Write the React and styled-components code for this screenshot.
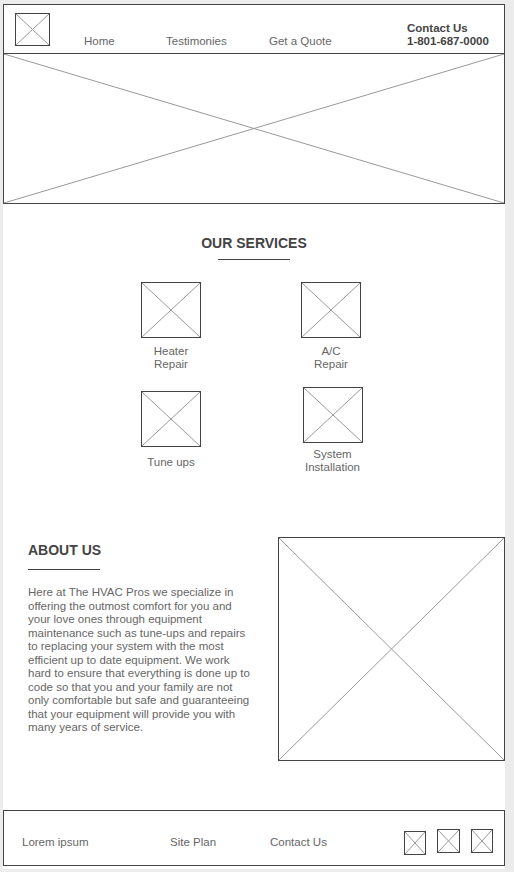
import React from 'react';
import styled, { createGlobalStyle } from 'styled-components';

const GlobalStyle = createGlobalStyle`
  body {
    margin: 0;
    background: #ececec;
    font-family: "Liberation Sans", Arial, sans-serif;
  }
`;

const Page = styled.div`
  box-sizing: border-box;
  width: 502px;
  margin: 4px 0 0 3px;
  padding-bottom: 3px;
  background: #fff;
`;

const Frame = styled.div`
  box-sizing: border-box;
  flex-shrink: 0;
  width: ${(p) => p.$w}px;
  height: ${(p) => p.$h}px;
  margin-top: ${(p) => p.$mt || 0}px;
  border: 1px solid #444;
  background: #fff;
`;

const CrossSvg = styled.svg`
  display: block;
  width: 100%;
  height: 100%;
`;

const Cross = () => (
  <CrossSvg viewBox="0 0 100 100" preserveAspectRatio="none">
    <line x1="0" y1="0" x2="100" y2="100" stroke="#999" strokeWidth="1" vectorEffect="non-scaling-stroke" />
    <line x1="100" y1="0" x2="0" y2="100" stroke="#999" strokeWidth="1" vectorEffect="non-scaling-stroke" />
  </CrossSvg>
);

const Placeholder = ({ w, h, mt }) => (
  <Frame $w={w} $h={h} $mt={mt}>
    <Cross />
  </Frame>
);

/* header */
const Header = styled.header`
  box-sizing: border-box;
  display: flex;
  align-items: flex-end;
  height: 50px;
  padding: 0 0 5px 11px;
  border: 1px solid #444;
`;

const LogoSlot = styled.div`
  align-self: flex-start;
  margin-top: 8px;
  margin-right: 34px;
`;

const NavLink = styled.a`
  width: ${(p) => p.$w}px;
  font-size: 11.5px;
  line-height: 13px;
  color: #666;
  text-decoration: none;
`;

const Contact = styled.div`
  font-size: 11.5px;
  line-height: 13px;
  font-weight: bold;
  color: #444;
`;

const Hero = styled.div`
  box-sizing: border-box;
  height: 150px;
  border: 1px solid #444;
  border-top: none;
`;

/* services */
const Services = styled.section`
  padding-top: 31px;
`;

const SectionTitle = styled.h2`
  margin: 0;
  font-size: 14px;
  line-height: 16px;
  font-weight: bold;
  color: #444;
  text-align: ${(p) => p.$align || 'left'};
`;

const Rule = styled.div`
  width: 72px;
  height: 1px;
  background: #444;
  margin: ${(p) => p.$mt}px ${(p) => (p.$center ? 'auto' : '0')} 0;
`;

const ServiceGrid = styled.div`
  display: grid;
  grid-template-columns: 160px 160px;
  row-gap: 16px;
  margin: 22px 0 0 88px;
`;

const ServiceItem = styled.div`
  display: flex;
  flex-direction: column;
  align-items: center;
  padding-top: ${(p) => p.$shift || 0}px;
  padding-left: ${(p) => p.$nudge || 0}px;
`;

const ServiceLabel = styled.div`
  margin-top: ${(p) => p.$gap}px;
  font-size: 11.5px;
  line-height: 13px;
  color: #666;
  text-align: center;
`;

/* about */
const About = styled.section`
  display: flex;
  justify-content: space-between;
  margin-top: 63px;
`;

const AboutText = styled.div`
  padding: 5px 0 0 25px;
`;

const Paragraph = styled.p`
  margin: 16px 0 0;
  font-size: 11.5px;
  line-height: 13.5px;
  color: #666;
  white-space: nowrap;
`;

/* footer */
const Footer = styled.footer`
  box-sizing: border-box;
  display: flex;
  align-items: center;
  height: 56px;
  margin-top: 49px;
  padding: 8px 0 0 18px;
  border: 1px solid #444;
`;

const FootLink = styled.a`
  width: ${(p) => p.$w}px;
  font-size: 11.5px;
  line-height: 13px;
  color: #666;
  text-decoration: none;
`;

const Socials = styled.div`
  display: flex;
  gap: 11px;
`;

const services = [
  { label: ['Heater', 'Repair'], gap: 7 },
  { label: ['A/C', 'Repair'], gap: 7 },
  { label: ['Tune ups'], gap: 9, shift: 4 },
  { label: ['System', 'Installation'], gap: 5, nudge: 3 },
];

const aboutLines = [
  'Here at The HVAC Pros we specialize in',
  'offering the outmost comfort for you and',
  'your love ones through equipment',
  'maintenance such as tune-ups and repairs',
  'to replacing your system with the most',
  'efficient up to date equipment. We work',
  'hard to ensure that everything is done up to',
  'code so that you and your family are not',
  'only comfortable but safe and guaranteeing',
  'that your equipment will provide you with',
  'many years of service.',
];

const App = () => (
  <>
    <GlobalStyle />
    <Page>
      <Header>
        <LogoSlot>
          <Placeholder w={35} h={33} />
        </LogoSlot>
        <NavLink $w={82}>Home</NavLink>
        <NavLink $w={103}>Testimonies</NavLink>
        <NavLink $w={138}>Get a Quote</NavLink>
        <Contact>
          Contact Us
          <br />
          1-801-687-0000
        </Contact>
      </Header>

      <Hero>
        <Cross />
      </Hero>

      <Services>
        <SectionTitle $align="center">OUR SERVICES</SectionTitle>
        <Rule $mt={8} $center />
        <ServiceGrid>
          {services.map((s) => (
            <ServiceItem key={s.label.join(' ')} $shift={s.shift} $nudge={s.nudge}>
              <Placeholder w={60} h={56} />
              <ServiceLabel $gap={s.gap}>
                {s.label.map((l, i) => (
                  <div key={i}>{l}</div>
                ))}
              </ServiceLabel>
            </ServiceItem>
          ))}
        </ServiceGrid>
      </Services>

      <About>
        <AboutText>
          <SectionTitle>ABOUT US</SectionTitle>
          <Rule $mt={11} />
          <Paragraph>
            {aboutLines.map((line, i) => (
              <React.Fragment key={i}>
                {line}
                {i < aboutLines.length - 1 && <br />}
              </React.Fragment>
            ))}
          </Paragraph>
        </AboutText>
        <Placeholder w={227} h={224} />
      </About>

      <Footer>
        <FootLink $w={148}>Lorem ipsum</FootLink>
        <FootLink $w={100}>Site Plan</FootLink>
        <FootLink $w={134}>Contact Us</FootLink>
        <Socials>
          <Placeholder w={22} h={24} mt={2} />
          <Placeholder w={23} h={24} />
          <Placeholder w={22} h={24} />
        </Socials>
      </Footer>
    </Page>
  </>
);

export default App;
